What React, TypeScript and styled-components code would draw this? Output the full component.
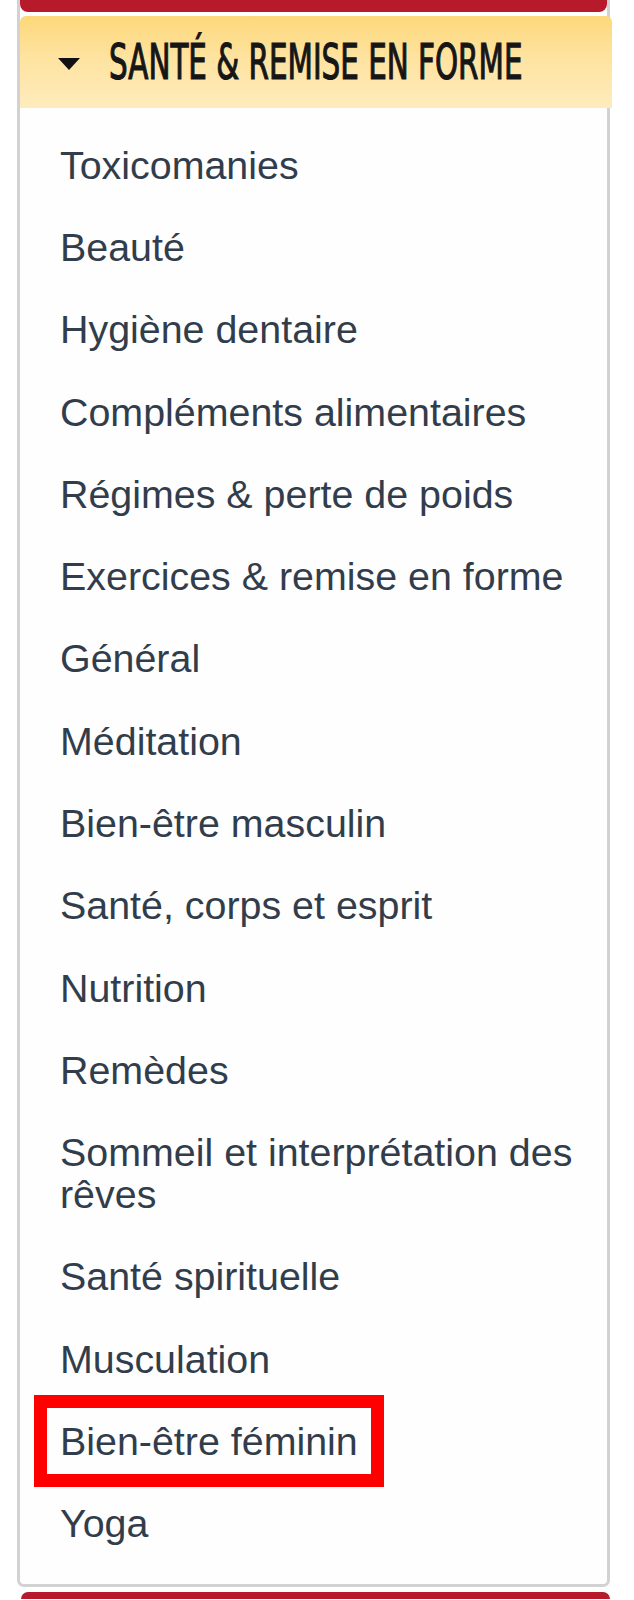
import React from "react";
import styled, { createGlobalStyle } from "styled-components";

const GlobalStyle = createGlobalStyle`
  html, body { margin: 0; padding: 0; background: #ffffff; }
  body { font-family: "Liberation Sans", Arial, sans-serif; }
`;

const Sidebar = styled.div`
  width: 593px;
  margin-left: 17px;
  display: flex;
  flex-direction: column;
`;

const TopCap = styled.div`
  height: 12px;
  border-left: 3px solid #d2d2d2;
  border-right: 3px solid #d2d2d2;
  box-sizing: border-box;
  display: flex;
`;

const RedTab = styled.div<{ $bottom?: boolean }>`
  flex: 1;
  background: #b71b2b;
  border-radius: ${(p) => (p.$bottom ? "8px 8px 0 0" : "0 0 8px 8px")};
`;

const BottomCap = styled.div`
  height: 7px;
  margin-top: 5px;
  margin-left: 4px;
  display: flex;
`;

const Panel = styled.section`
  border: 3px solid #d2d2d2;
  border-top: none;
  border-radius: 0 0 7px 7px;
  background: #fefefe;
  padding-top: 4px;
  display: flex;
  flex-direction: column;
`;

const PanelHeader = styled.div`
  height: 92px;
  margin-right: -5px;
  border-radius: 6px 6px 0 0;
  background: linear-gradient(180deg, #fdd87a 0%, #fee3a0 45%, #feecbd 100%);
  display: flex;
  align-items: center;
  padding-left: 38px;
  box-sizing: border-box;
`;

const Caret = styled.span`
  width: 0;
  height: 0;
  border-left: 11px solid transparent;
  border-right: 11px solid transparent;
  border-top: 12px solid #111111;
  margin-top: 4px;
`;

const HeaderTitle = styled.h2`
  margin: 0 0 0 29px;
  font-family: "DejaVu Sans Condensed", "DejaVu Sans", sans-serif;
  font-weight: normal;
  font-size: 49px;
  line-height: 1;
  color: #161616;
  -webkit-text-stroke: 1.2px #161616;
  white-space: nowrap;
  transform: scaleX(0.667);
  transform-origin: left center;
`;

const List = styled.ul`
  list-style: none;
  margin: 0;
  padding: 15.6px 0 20px 0;
`;

const Item = styled.li`
  padding: 20.15px 20px 20.15px 40px;
  font-size: 39.4px;
  line-height: 42px;
  color: #323d4c;
`;

const Label = styled.span<{ $marked?: boolean }>`
  position: relative;
  display: inline-block;
  ${(p) =>
    p.$marked &&
    `
    &::after {
      content: "";
      position: absolute;
      left: -26px;
      right: -26px;
      top: -25px;
      bottom: -25px;
      border: 13px solid #ff0000;
      pointer-events: none;
    }
  `}
`;

const items = [
  "Toxicomanies",
  "Beauté",
  "Hygiène dentaire",
  "Compléments alimentaires",
  "Régimes & perte de poids",
  "Exercices & remise en forme",
  "Général",
  "Méditation",
  "Bien-être masculin",
  "Santé, corps et esprit",
  "Nutrition",
  "Remèdes",
  "Sommeil et interprétation des rêves",
  "Santé spirituelle",
  "Musculation",
  "Bien-être féminin",
  "Yoga",
];

export default function App() {
  return (
    <>
      <GlobalStyle />
      <Sidebar>
        <TopCap>
          <RedTab />
        </TopCap>
        <Panel>
          <PanelHeader>
            <Caret />
            <HeaderTitle>SANTÉ &amp; REMISE EN FORME</HeaderTitle>
          </PanelHeader>
          <List>
            {items.map((t) => (
              <Item key={t}>
                <Label $marked={t === "Bien-être féminin"}>{t}</Label>
              </Item>
            ))}
          </List>
        </Panel>
        <BottomCap>
          <RedTab $bottom />
        </BottomCap>
      </Sidebar>
    </>
  );
}
